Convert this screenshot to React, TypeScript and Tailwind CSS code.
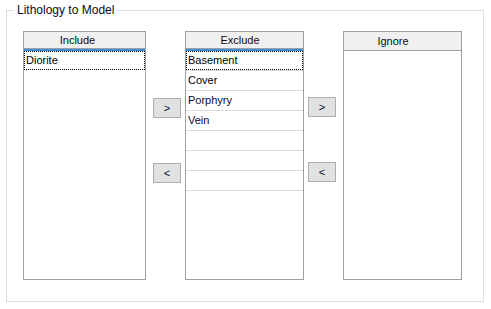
import React from "react";

const font = { fontFamily: "Tahoma, 'Liberation Sans', Arial, sans-serif" };

function Header({ title, pr }: { title: string; pr: string }) {
  return (
    <div className="h-[19px] bg-[#f0f0f0] border-b-2 border-b-[#3d8fd6] relative flex items-center justify-center text-[11px] text-[#0a0a26] leading-none shrink-0">
      <div className="absolute left-0 right-0 bottom-0 h-px bg-[#a0a0a0]" />
      <span className={pr}>{title}</span>
    </div>
  );
}

function Row({ text, focus, line, blue }: { text?: string; focus?: boolean; line?: boolean; blue?: boolean }) {
  return (
    <div className={"h-[20px] shrink-0 " + (line ? "border-b border-[#dadada]" : "")}>
      <div
        className={
          "h-[19px] flex items-center pl-[2px] text-[11px] leading-none " +
          (focus ? "outline-1 outline-dotted outline-black -outline-offset-1 " : "") +
          (blue ? "text-[#0a0a30]" : "text-black")
        }
      >
        {text}
      </div>
    </div>
  );
}

function Btn({ label }: { label: string }) {
  return (
    <div className="w-[28px] h-[20px] bg-[#e1e1e1] border border-[#adadad] flex items-center justify-center text-[11px] text-[#0a0a30] leading-none">
      {label}
    </div>
  );
}

export default function App() {
  return (
    <div className="w-[491px] h-[309px] bg-white relative" style={font}>
      <div className="absolute left-[6px] top-[10px] w-[478px] h-[292px] border border-[#dcdcdc]" />
      <div className="absolute left-[14px] top-[3px] bg-white px-[3px] text-[12px] leading-[15px] text-[#0a0a26]">
        Lithology to Model
      </div>
      <div className="relative flex pl-[23px] pt-[31px]">
        <div className="w-[123px] h-[249px] border border-[#a0a0a0] bg-white flex flex-col">
          <Header title="Include" pr="pr-[14px]" />
          <Row text="Diorite" focus />
        </div>
        <div className="ml-[7px] w-[28px] flex flex-col pt-[67px] gap-[45px]">
          <Btn label=">" />
          <Btn label="<" />
        </div>
        <div className="ml-[4px] w-[119px] h-[249px] border border-[#a0a0a0] bg-white flex flex-col">
          <Header title="Exclude" pr="pr-[9px]" />
          <Row text="Basement" focus line />
          <Row text="Cover" line />
          <Row text="Porphyry" line blue />
          <Row text="Vein" line blue />
          <Row line />
          <Row line />
          <Row line />
        </div>
        <div className="ml-[4px] w-[28px] flex flex-col pt-[66px] gap-[45px]">
          <Btn label=">" />
          <Btn label="<" />
        </div>
        <div className="ml-[7px] w-[119px] h-[249px] border border-[#a0a0a0] bg-white flex flex-col">
          <div className="h-[19px] bg-[#f0f0f0] border-b border-[#a0a0a0] flex items-center justify-center text-[11px] text-[#0a0a26] leading-none shrink-0">
            <span className="pr-[19px]">Ignore</span>
          </div>
        </div>
      </div>
    </div>
  );
}
